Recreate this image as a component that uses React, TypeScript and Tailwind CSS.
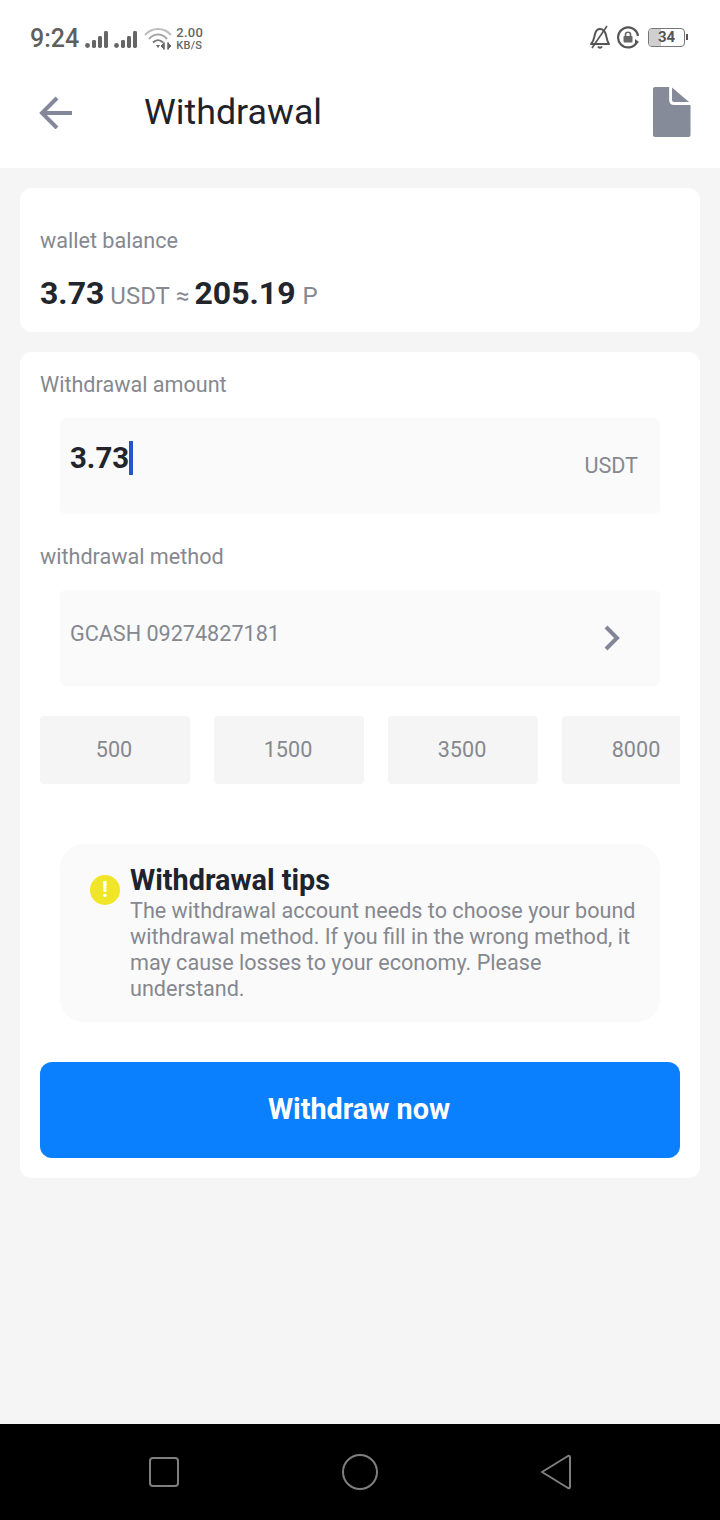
import React from "react";

function Signal() {
  return (
    <svg width="24" height="18" viewBox="0 0 24 18" className="block">
      <circle cx="2.5" cy="14.5" r="2.4" fill="#666" />
      <rect x="7" y="9" width="4" height="8" rx="1.4" fill="#666" />
      <rect x="13" y="5" width="4" height="12" rx="1.4" fill="#666" />
      <rect x="19" y="0" width="4" height="17" rx="1.4" fill="#666" />
    </svg>
  );
}

function StatusBar() {
  return (
    <div className="flex h-[76px] items-start justify-between pl-[30px] pr-[32px] pt-[25px]">
      <div className="flex items-center">
        <span className="text-[25px] leading-[28px] font-medium text-[#5f5f5f]">9:24</span>
        <div className="ml-[6px] mt-[1px] flex gap-[5px]">
          <Signal />
          <Signal />
        </div>
        <svg width="28" height="24" viewBox="0 0 28 24" className="ml-[6px]" fill="none">
          <path d="M1 8 C8 0 20 0 27 8" stroke="#bdbdbd" strokeWidth="2" />
          <path d="M5 12 C10 6 18 6 23 12" stroke="#a8a8a8" strokeWidth="2" />
          <path d="M9 15.5 C12 12.5 16 12.5 19 15.5" stroke="#777" strokeWidth="2" />
          <path d="M12 18 L16 18 L14 21 Z" fill="#666" />
          <path d="M20 15 V23 M24 15 V23 M17 19 L20 16 V22 Z M27 19 L24 16 V22 Z" stroke="#666" strokeWidth="1" fill="#666" />
        </svg>
        <div className="ml-[4px] flex flex-col items-start text-[#666] leading-none">
          <span className="text-[13px] leading-[13px] font-medium tracking-[0.3px]">2.00</span>
          <span className="text-[11px] leading-[13px] font-medium tracking-[0.3px]">KB/S</span>
        </div>
      </div>
      <div className="flex items-center">
        <svg width="22" height="24" viewBox="0 0 22 24" fill="none" stroke="#555" strokeWidth="2">
          <path d="M2 19 C5 16 5 13 6 9 C7 5 9 4 11 4 C14 4 16 6 17 10 C18 14 18 16 20 19 Z" strokeLinejoin="round" />
          <path d="M9 21.5 C10 23 12 23 13 21.5" />
          <path d="M3 23 L18 1" strokeWidth="1.6" />
        </svg>
        <svg width="24" height="24" viewBox="0 0 24 24" fill="none" className="ml-[5px]">
          <path d="M21 17 A10 10 0 1 1 22 11" stroke="#555" strokeWidth="2.2" />
          <path d="M19 14 L23 17 L19 20 Z" fill="#555" />
          <rect x="7.5" y="11" width="9" height="6.5" rx="1" fill="#666" />
          <path d="M9.5 11 V9.5 C9.5 6.5 14.5 6.5 14.5 9.5 V11" stroke="#666" strokeWidth="1.6" />
        </svg>
        <div className="ml-[8px] relative flex h-[19px] w-[37px] items-center justify-center overflow-hidden rounded-[4px] border border-[#777] bg-white">
          <div className="absolute left-0 top-0 h-full w-[12px] bg-[#cfcfcf]" />
          <span className="relative text-[15px] leading-none font-bold text-[#555]">34</span>
        </div>
        <div className="ml-[1px] h-[6px] w-[2px] bg-[#555]" />
      </div>
    </div>
  );
}

function Header() {
  return (
    <div className="flex h-[92px] items-start bg-white pl-[39px] pr-[29px]">
      <svg width="34" height="34" viewBox="0 0 34 34" fill="none" stroke="#85889a" strokeWidth="4" className="mt-[19px]">
        <path d="M33 18 H4" />
        <path d="M18 3 L3 18 L18 33" strokeLinejoin="miter" />
      </svg>
      <div className="ml-[71px] mt-[15px] text-[35.8px] leading-[42px] text-[#1f2329]">Withdrawal</div>
      <svg width="38" height="50" viewBox="0 0 40 50" preserveAspectRatio="none" className="ml-auto mt-[11px]" fill="#868b99">
        <path d="M2 0 H17 V13 C17 16 19 18 22 18 H39.5 V48 C39.5 49 38.5 50 37.5 50 H2 C1 50 0 49 0 48 V2 C0 1 1 0 2 0 Z" />
        <path d="M20 0.5 L38 15 H22 C21 15 20 14 20 13 Z" />
      </svg>
    </div>
  );
}

function Chip({ label }: { label: string }) {
  return (
    <div className="flex h-[68px] w-[150px] flex-none items-center justify-center rounded-[4px] bg-[#f5f5f5] pr-[2px] text-[21.6px] text-[#85888f]">
      <span className="leading-[26px]">{label}</span>
    </div>
  );
}

export default function App() {
  return (
    <div
      className="flex h-[1520px] w-[720px] flex-col overflow-hidden bg-[#f5f5f5]"
      style={{ fontFamily: "Roboto, sans-serif" }}
    >
      <div className="bg-white">
        <StatusBar />
        <Header />
      </div>

      <div className="flex flex-1 flex-col gap-[20px] px-[20px] pt-[20px]">
        <section className="h-[144px] rounded-[12px] bg-white px-[20px] pt-[40px]">
          <div className="text-[21.6px] leading-[26px] text-[#85888f]">wallet balance</div>
          <div className="mt-[19px] flex items-baseline leading-[40px] text-[#85888f]">
            <span className="text-[32px] font-bold text-[#22252b]">3.73</span>
            <span className="ml-[6px] text-[24px]">USDT</span>
            <span className="ml-[6px] text-[24px]">≈</span>
            <span className="ml-[5px] text-[32px] font-bold text-[#22252b]">205.19</span>
            <span className="ml-[7px] text-[24px]">P</span>
          </div>
        </section>

        <section className="h-[826px] rounded-[12px] bg-white px-[20px] pt-[20px]">
          <div className="text-[21.6px] leading-[26px] text-[#85888f]">Withdrawal amount</div>
          <div className="mx-[20px] mt-[20px] flex h-[96px] items-start justify-between rounded-[6px] bg-[#fafafa] pl-[10px] pr-[22px]">
            <div className="mt-[22px] flex items-center">
              <span className="text-[29.4px] leading-[36px] font-bold text-[#22252b]">3.73</span>
              <span className="h-[34px] w-[4px] bg-[#2456c8]" />
            </div>
            <span className="mt-[35px] text-[21.6px] leading-[26px] text-[#85888f]">USDT</span>
          </div>

          <div className="mt-[30px] text-[21.6px] leading-[26px] text-[#85888f]">withdrawal method</div>
          <div className="mx-[20px] mt-[20px] flex h-[96px] items-start justify-between rounded-[6px] bg-[#fafafa] pl-[10px] pr-[39px]">
            <span className="mt-[31px] text-[21.6px] leading-[26px] text-[#85888f]">GCASH 09274827181</span>
            <svg width="18" height="26" viewBox="0 0 18 26" fill="none" stroke="#85859a" strokeWidth="4" className="mt-[35px]">
              <path d="M3 2 L14 13 L3 24" />
            </svg>
          </div>

          <div className="mt-[30px] flex gap-[24px] overflow-hidden">
            <Chip label="500" />
            <Chip label="1500" />
            <Chip label="3500" />
            <Chip label="8000" />
          </div>

          <div className="mx-[20px] mt-[60px] flex h-[178px] items-start rounded-[24px] bg-[#fafafa] pl-[30px] pr-[20px] pt-[21px]">
            <div className="mt-[10px] flex h-[30px] w-[30px] flex-none items-center justify-center rounded-full bg-[#f0e526] text-[22px] leading-none font-bold text-white">
              !
            </div>
            <div className="ml-[10px]">
              <div className="text-[28.8px] leading-[30px] font-bold text-[#1c2430]">Withdrawal tips</div>
              <p className="mt-[3px] text-[21.6px] leading-[26px] text-[#85888f]">
                The withdrawal account needs to choose your bound withdrawal method. If you fill in the wrong method, it may cause losses to your economy. Please understand.
              </p>
            </div>
          </div>

          <button className="mt-[40px] flex h-[96px] w-full items-center justify-center rounded-[12px] bg-[#0a80ff] pb-[3px] pr-[2px] text-[28.8px] font-bold text-white">
            <span className="leading-[34px]">Withdraw now</span>
          </button>
        </section>
      </div>

      <div className="flex h-[96px] items-center bg-black">
        <div className="ml-[149px] h-[30px] w-[30px] rounded-[4px] border-2 border-[#7f7f7f]" />
        <div className="ml-[163px] h-[36px] w-[36px] rounded-full border-2 border-[#7f7f7f]" />
        <svg width="32" height="36" viewBox="0 0 32 36" fill="none" stroke="#7f7f7f" strokeWidth="2" strokeLinejoin="round" className="ml-[162px]">
          <path d="M2 18 L28 2 C29 1.5 30 2 30 3 V33 C30 34 29 34.5 28 34 Z" />
        </svg>
      </div>
    </div>
  );
}
